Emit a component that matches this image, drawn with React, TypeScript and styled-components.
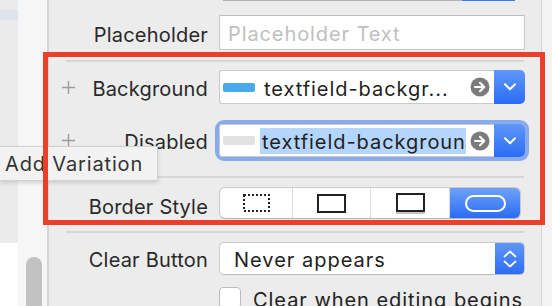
import styled, { createGlobalStyle } from 'styled-components';

const GlobalStyle = createGlobalStyle`
  html, body {
    margin: 0;
    padding: 0;
  }
  body {
    background: #ececec;
    font-family: Inter, "Liberation Sans", sans-serif;
    overflow: hidden;
  }
`;

const Plus = () => (
  <svg width="13" height="13" viewBox="0 0 13 13">
    <path d="M6.5 0v13M0 6.5h13" stroke="#9c9c9c" strokeWidth="1.4" />
  </svg>
);

const Chevron = () => (
  <svg width="12" height="8" viewBox="0 0 12 8">
    <path d="M1 1.2l5 5 5-5" fill="none" stroke="#fff" strokeWidth="2" strokeLinecap="round" strokeLinejoin="round" />
  </svg>
);

const Stepper = () => (
  <svg width="14" height="18" viewBox="0 0 14 18">
    <path d="M1.5 6.5l5.5-5 5.5 5M1.5 11.5l5.5 5 5.5-5" fill="none" stroke="#fff" strokeWidth="1.8" strokeLinecap="round" strokeLinejoin="round" />
  </svg>
);

const GoArrow = () => (
  <svg width="20" height="20" viewBox="0 0 20 20">
    <circle cx="10" cy="10" r="9.5" fill="#7b7b7b" />
    <path d="M5 10h9M10 5.8l4.2 4.2-4.2 4.2" fill="none" stroke="#fff" strokeWidth="2.2" strokeLinecap="round" strokeLinejoin="round" />
  </svg>
);

const DottedIcon = () => (
  <svg width="27" height="18" viewBox="0 0 27 18">
    <rect x="1" y="1" width="25" height="16" fill="none" stroke="#222" strokeWidth="2" strokeDasharray="2 2" />
  </svg>
);

const LineIcon = () => (
  <svg width="29" height="19" viewBox="0 0 29 19">
    <rect x="1" y="1" width="27" height="17" fill="none" stroke="#222" strokeWidth="2" />
  </svg>
);

const BezelIcon = () => (
  <svg width="29" height="21" viewBox="0 0 29 21">
    <rect x="1" y="1" width="27" height="17" fill="none" stroke="#222" strokeWidth="2" />
    <rect x="0" y="19" width="29" height="2" fill="#c4c4c4" />
  </svg>
);

const RoundedIcon = () => (
  <svg width="41" height="17" viewBox="0 0 41 17">
    <rect x="1" y="1" width="39" height="15" rx="7.5" fill="none" stroke="#fff" strokeWidth="2" />
  </svg>
);

const App = () => {
  return (
    <Screen>
      <GlobalStyle />
      <Outline>
        <OutlineSelection />
        <OutlineFill />
        <OutlineWhite />
      </Outline>
      <Track>
        <Thumb />
      </Track>
      <Divider />

      <Panel>
        <Row $height={2} $top={0}>
          <span />
          <span />
          <StubField />
        </Row>

        <Row $height={35} $top={13}>
          <span />
          <Label $shift={2}>Placeholder</Label>
          <TextField>Placeholder Text</TextField>
        </Row>

        <Separator $top={10} />

        <Row $height={34} $top={8}>
          <PlusCell>
            <Plus />
          </PlusCell>
          <Label $shift={2}>Background</Label>
          <Combo>
            <ComboField>
              <Swatch $color="#4aa9ea" />
              <ComboText>textfield-backgr...</ComboText>
              <GoArrow />
            </ComboField>
            <BlueButton>
              <Chevron />
            </BlueButton>
          </Combo>
        </Row>

        <Row $height={33} $top={20}>
          <PlusCell>
            <Plus />
          </PlusCell>
          <Label $shift={1}>Disabled</Label>
          <Combo $focused>
            <ComboField>
              <Swatch $color="#e2e2e2" $tight />
              <ComboText>
                <Selected>textfield-background</Selected>
              </ComboText>
              <GoArrow />
            </ComboField>
            <BlueButton>
              <Chevron />
            </BlueButton>
          </Combo>
        </Row>

        <Separator $top={19} />

        <Row $height={32} $top={9}>
          <span />
          <Label $shift={4}>Border Style</Label>
          <Segmented>
            <Segment>
              <DottedIcon />
            </Segment>
            <Segment>
              <LineIcon />
            </Segment>
            <Segment>
              <BezelIcon />
            </Segment>
            <Segment $active>
              <RoundedIcon />
            </Segment>
          </Segmented>
        </Row>

        <Separator $top={12} />

        <Row $height={33} $top={9}>
          <span />
          <Label $shift={1}>Clear Button</Label>
          <Popup>
            <PopupText>Never appears</PopupText>
            <StepperButton>
              <Stepper />
            </StepperButton>
          </Popup>
        </Row>

        <Row $height={22} $top={12}>
          <span />
          <span />
          <CheckRow>
            <Checkbox />
            <CheckLabel>Clear when editing begins</CheckLabel>
          </CheckRow>
        </Row>
      </Panel>

      <Gutter />

      <Tooltip>Add Variation</Tooltip>
      <Annotation />
    </Screen>
  );
};

const Screen = styled.div`
  position: relative;
  width: 552px;
  height: 306px;
  overflow: hidden;
  display: flex;
  background: #ececec;
  color: #262626;
  font-size: 20px;
`;

const Outline = styled.div`
  width: 18px;
  display: flex;
  flex-direction: column;
  background: #ebebeb;
`;

const OutlineSelection = styled.div`
  margin-top: 10px;
  height: 10px;
  background: #dde4ee;
`;

const OutlineFill = styled.div`
  flex: 1;
`;

const OutlineWhite = styled.div`
  height: 63px;
  background: #ffffff;
`;

const Track = styled.div`
  width: 29px;
  padding-top: 257px;
  box-sizing: border-box;
  background: #f6f6f6;
`;

const Thumb = styled.div`
  margin-left: 8px;
  width: 16px;
  height: 70px;
  border-radius: 8px;
  background: #c2c2c2;
`;

const Divider = styled.div`
  width: 2px;
  background: #d4d4d4;
`;

const Panel = styled.div`
  width: 492px;
  display: flex;
  flex-direction: column;
`;

const Gutter = styled.div`
  width: 11px;
  box-sizing: border-box;
  border-left: 1px solid #d3d3d3;
  background: #f3f3f3;
`;

const Row = styled.div<{ $height: number; $top: number }>`
  display: grid;
  grid-template-columns: 39px 131px 306px;
  height: ${(p) => p.$height}px;
  margin-top: ${(p) => p.$top}px;
  flex-shrink: 0;
`;

const PlusCell = styled.div`
  display: flex;
  align-items: center;
  justify-content: center;
`;

const Label = styled.div<{ $shift: number }>`
  display: flex;
  align-items: center;
  justify-content: flex-end;
  padding-right: 11px;
  padding-top: ${(p) => p.$shift * 2}px;
  color: #292929;
  letter-spacing: 0.2px;
  white-space: nowrap;
`;

const StubField = styled.div`
  margin-left: 4px;
  width: 292px;
  height: 1px;
  background: linear-gradient(to right, #b4b4b4 0 239px, #3b7bf5 239px);
`;

const TextField = styled.div`
  box-sizing: border-box;
  display: flex;
  align-items: center;
  padding: 2px 0 0 8px;
  background: #ffffff;
  border: 1px solid #c9c9c9;
  border-top-color: #bcbcbc;
  color: #c0c0c0;
  letter-spacing: 0.9px;
`;

const Separator = styled.div<{ $top: number }>`
  margin: ${(p) => p.$top}px 0 0 17px;
  width: 458px;
  height: 2px;
  background: #d6d6d6;
  flex-shrink: 0;
`;

const Combo = styled.div<{ $focused?: boolean }>`
  display: flex;
  border-radius: 5px;
  box-shadow: ${(p) => (p.$focused ? '0 0 0 4px #88abee' : 'none')};
`;

const ComboField = styled.div`
  flex: 1;
  min-width: 0;
  box-sizing: border-box;
  display: flex;
  align-items: center;
  padding: 0 4px 0 3px;
  background: #ffffff;
  border: 1px solid #c9c9c9;
  border-right: none;
  border-radius: 3px 0 0 3px;
  color: #1f1f1f;
`;

const Swatch = styled.div<{ $color: string; $tight?: boolean }>`
  flex-shrink: 0;
  width: 32px;
  height: 9px;
  border-radius: 2px;
  background: ${(p) => p.$color};
  margin-right: ${(p) => (p.$tight ? 5 : 9)}px;
`;

const ComboText = styled.div`
  flex: 1;
  min-width: 0;
  overflow: hidden;
  white-space: nowrap;
  padding-top: 3px;
  margin-right: 4px;
  letter-spacing: 0.95px;
`;

const Selected = styled.span`
  background: #b4d5fd;
  padding: 2px 0 2px 2px;
`;

const BlueButton = styled.div`
  width: 31px;
  flex-shrink: 0;
  display: flex;
  align-items: center;
  justify-content: center;
  border-radius: 0 5px 5px 0;
  background: linear-gradient(#5f98f8, #2b6cf5);
`;

const Segmented = styled.div`
  width: 302px;
  box-sizing: border-box;
  display: grid;
  grid-template-columns: 72px 78px 79px 1fr;
  background: #ffffff;
  border: 1px solid #cacaca;
  border-bottom-color: #b4b4b4;
  border-radius: 6px;
  overflow: hidden;
`;

const Segment = styled.div<{ $active?: boolean }>`
  display: flex;
  align-items: center;
  justify-content: center;
  border-left: 1px solid #dcdcdc;
  background: ${(p) => (p.$active ? 'linear-gradient(#6ea2f8, #2b6cf5)' : 'transparent')};

  &:first-child {
    border-left: none;
  }
`;

const Popup = styled.div`
  display: flex;
  box-sizing: border-box;
  background: #ffffff;
  border: 1px solid #cbcbcb;
  border-bottom-color: #b8b8b8;
  border-radius: 5px;
  overflow: hidden;
`;

const PopupText = styled.div`
  flex: 1;
  display: flex;
  align-items: center;
  padding: 2px 0 0 14px;
  color: #1f1f1f;
  letter-spacing: 1px;
`;

const StepperButton = styled.div`
  width: 29px;
  display: flex;
  align-items: center;
  justify-content: center;
  background: linear-gradient(#5f98f8, #2b6cf5);
`;

const CheckRow = styled.div`
  display: flex;
  align-items: flex-start;
`;

const Checkbox = styled.div`
  flex-shrink: 0;
  width: 22px;
  height: 22px;
  box-sizing: border-box;
  border: 1px solid #bdbdbd;
  border-radius: 4px;
  background: #ffffff;
`;

const CheckLabel = styled.div`
  margin-left: 12px;
  padding-top: 1px;
  white-space: nowrap;
  color: #222;
  letter-spacing: 0.95px;
`;

const Tooltip = styled.div`
  position: absolute;
  left: 0;
  top: 146px;
  width: 158px;
  height: 35px;
  box-sizing: border-box;
  display: flex;
  align-items: center;
  padding: 1px 0 0 5px;
  background: #f2f2f2;
  border: 1px solid #d2d2d2;
  border-left: none;
  box-shadow: 0 2px 4px rgba(0, 0, 0, 0.14);
  color: #333;
  letter-spacing: 0.85px;
  white-space: nowrap;
  z-index: 5;
`;

const Annotation = styled.div`
  position: absolute;
  left: 43px;
  top: 52px;
  width: 502px;
  height: 173px;
  box-sizing: border-box;
  border: 5px solid #ea4029;
  pointer-events: none;
  z-index: 10;
`;

export default App;
